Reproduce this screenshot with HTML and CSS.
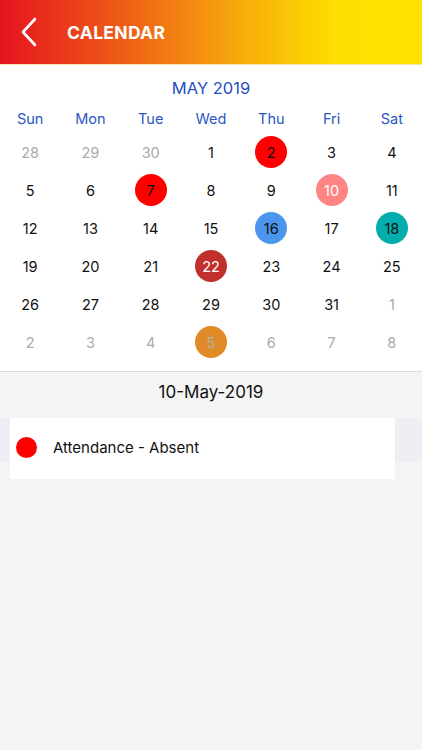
FILE: index.html
```html
<!DOCTYPE html>
<html>
<head>
<meta charset="utf-8">
<link rel="stylesheet" href="styles.css">
</head>
<body>
<header class="topbar">
  <svg class="back" width="18" height="30" viewBox="0 0 18 30"><path d="M15 2 L3 15 L15 28" fill="none" stroke="#fff" stroke-width="2.6" stroke-linecap="round" stroke-linejoin="round"/></svg>
  <span class="title">CALENDAR</span>
</header>
<section class="calendar">
  <div class="month">MAY 2019</div>
  <div class="weekdays">
    <span>Sun</span><span>Mon</span><span>Tue</span><span>Wed</span><span>Thu</span><span>Fri</span><span>Sat</span>
  </div>
  <div class="days">
    <span class="d other">28</span><span class="d other">29</span><span class="d other">30</span><span class="d">1</span><span class="d"><i class="c red">2</i></span><span class="d">3</span><span class="d">4</span>
    <span class="d">5</span><span class="d">6</span><span class="d"><i class="c red">7</i></span><span class="d">8</span><span class="d">9</span><span class="d"><i class="c pink">10</i></span><span class="d">11</span>
    <span class="d">12</span><span class="d">13</span><span class="d">14</span><span class="d">15</span><span class="d"><i class="c blue">16</i></span><span class="d">17</span><span class="d"><i class="c teal">18</i></span>
    <span class="d">19</span><span class="d">20</span><span class="d">21</span><span class="d"><i class="c brick">22</i></span><span class="d">23</span><span class="d">24</span><span class="d">25</span>
    <span class="d">26</span><span class="d">27</span><span class="d">28</span><span class="d">29</span><span class="d">30</span><span class="d">31</span><span class="d other">1</span>
    <span class="d other">2</span><span class="d other">3</span><span class="d other">4</span><span class="d other"><i class="c orange">5</i></span><span class="d other">6</span><span class="d other">7</span><span class="d other">8</span>
  </div>
</section>
<div class="selected">10-May-2019</div>
<div class="events">
  <div class="card">
    <span class="dot"></span>
    <span class="label">Attendance - Absent</span>
  </div>
</div>
</body>
</html>
```
FILE: styles.css
```css
html, body {
  margin: 0;
  padding: 0;
}
body {
  width: 422px;
  height: 750px;
  background: #f4f4f4;
  font-family: Inter, "Liberation Sans", sans-serif;
  color: #111;
  overflow: hidden;
}
.topbar {
  height: 65px;
  box-sizing: border-box;
  display: flex;
  align-items: center;
  padding-left: 20px;
  background: linear-gradient(90deg, #e6141f 0%, #ec4a18 22%, #f28112 42%, #f7ad0b 58%, #fbcf04 72%, #ffdf00 80%, #ffe200 100%);
  border-bottom: 1px solid #f5e6b0;
}
.back {
  display: block;
  margin-top: -1px;
}
.title {
  margin-left: 29px;
  color: #fff;
  font-weight: 700;
  font-size: 17.5px;
  letter-spacing: 0.3px;
}
.calendar {
  background: #fff;
  padding: 12px 0 10px;
  border-bottom: 1px solid #dcdcdc;
}
.month {
  text-align: center;
  font-size: 16.5px;
  line-height: 22px;
  color: #2450c0;
}
.weekdays {
  display: grid;
  grid-template-columns: repeat(7, 1fr);
  margin-top: 9px;
  line-height: 22px;
  font-size: 14.5px;
  color: #2a56c6;
  text-align: center;
}
.days {
  display: grid;
  grid-template-columns: repeat(7, 1fr);
  grid-auto-rows: 38px;
  margin-top: 3px;
  font-size: 14.5px;
}
.d {
  display: flex;
  align-items: center;
  justify-content: center;
}
.d.other {
  color: #aaaaaa;
}
.c {
  font-style: normal;
  width: 32px;
  height: 32px;
  border-radius: 50%;
  display: flex;
  align-items: center;
  justify-content: center;
}
.red { background: #ff0000; color: #111; }
.pink { background: #ff8585; color: #fff; }
.blue { background: #4b96ec; color: #111; }
.teal { background: #04adad; color: #111; }
.brick { background: #c1312b; color: #fff; }
.orange { background: #e08b27; color: #b0b0b0; }
.selected {
  height: 46px;
  box-sizing: border-box;
  padding-top: 9px;
  line-height: 22px;
  text-align: center;
  font-size: 17px;
  color: #111;
}
.events {
  background: linear-gradient(#efeef4 0, #efeef4 44px, transparent 44px);
  padding: 0 27px 0 10px;
}
.card {
  height: 61px;
  background: #fff;
  display: flex;
  align-items: center;
  padding-left: 6px;
}
.dot {
  width: 21px;
  height: 21px;
  border-radius: 50%;
  background: #ff0000;
  margin-top: -3px;
}
.label {
  margin-left: 16px;
  margin-top: -2px;
  font-size: 15px;
  color: #111;
}
```
